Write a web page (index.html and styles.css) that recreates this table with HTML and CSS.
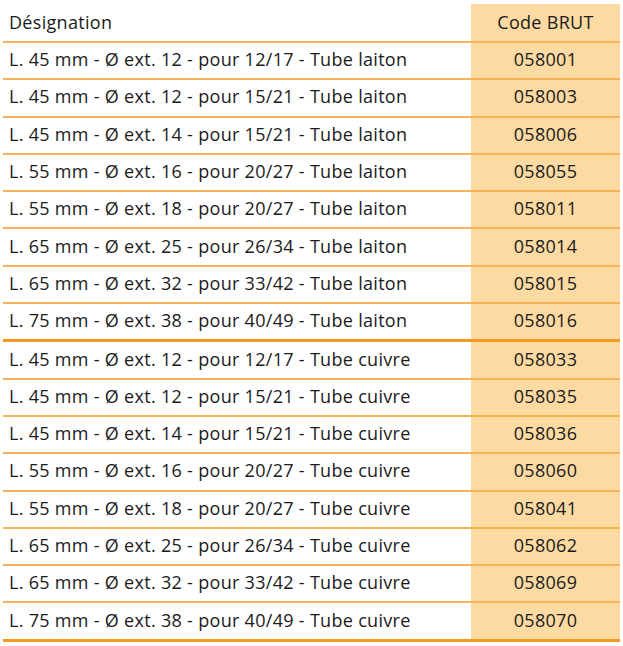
FILE: index.html
```html
<!DOCTYPE html>
<html lang="fr">
<head>
<meta charset="utf-8">
<link rel="stylesheet" href="styles.css">
<title>Tubes</title>
</head>
<body>
<table class="ref-table">
  <colgroup>
    <col class="col-designation">
    <col class="col-code">
  </colgroup>
  <thead>
    <tr><th class="designation">Désignation</th><th class="code">Code BRUT</th></tr>
  </thead>
  <tbody>
    <tr><td class="designation">L. 45 mm - Ø ext. 12 - pour 12/17 - Tube laiton</td><td class="code">058001</td></tr>
    <tr><td class="designation">L. 45 mm - Ø ext. 12 - pour 15/21 - Tube laiton</td><td class="code">058003</td></tr>
    <tr><td class="designation">L. 45 mm - Ø ext. 14 - pour 15/21 - Tube laiton</td><td class="code">058006</td></tr>
    <tr><td class="designation">L. 55 mm - Ø ext. 16 - pour 20/27 - Tube laiton</td><td class="code">058055</td></tr>
    <tr><td class="designation">L. 55 mm - Ø ext. 18 - pour 20/27 - Tube laiton</td><td class="code">058011</td></tr>
    <tr><td class="designation">L. 65 mm - Ø ext. 25 - pour 26/34 - Tube laiton</td><td class="code">058014</td></tr>
    <tr><td class="designation">L. 65 mm - Ø ext. 32 - pour 33/42 - Tube laiton</td><td class="code">058015</td></tr>
    <tr class="group-end"><td class="designation">L. 75 mm - Ø ext. 38 - pour 40/49 - Tube laiton</td><td class="code">058016</td></tr>
    <tr><td class="designation">L. 45 mm - Ø ext. 12 - pour 12/17 - Tube cuivre</td><td class="code">058033</td></tr>
    <tr><td class="designation">L. 45 mm - Ø ext. 12 - pour 15/21 - Tube cuivre</td><td class="code">058035</td></tr>
    <tr><td class="designation">L. 45 mm - Ø ext. 14 - pour 15/21 - Tube cuivre</td><td class="code">058036</td></tr>
    <tr><td class="designation">L. 55 mm - Ø ext. 16 - pour 20/27 - Tube cuivre</td><td class="code">058060</td></tr>
    <tr><td class="designation">L. 55 mm - Ø ext. 18 - pour 20/27 - Tube cuivre</td><td class="code">058041</td></tr>
    <tr><td class="designation">L. 65 mm - Ø ext. 25 - pour 26/34 - Tube cuivre</td><td class="code">058062</td></tr>
    <tr><td class="designation">L. 65 mm - Ø ext. 32 - pour 33/42 - Tube cuivre</td><td class="code">058069</td></tr>
    <tr class="group-end"><td class="designation">L. 75 mm - Ø ext. 38 - pour 40/49 - Tube cuivre</td><td class="code">058070</td></tr>
  </tbody>
</table>
</body>
</html>
```

FILE: styles.css
```css
html, body {
  margin: 0;
  padding: 0;
  background: #ffffff;
}
body {
  padding: 4px 3px 0 3px;
  font-family: "Open Sans", "Noto Sans", sans-serif;
  color: #1b1b1b;
}
.ref-table {
  border-collapse: collapse;
  width: 617px;
  table-layout: fixed;
}
.col-designation {
  width: 468px;
}
.col-code {
  width: 149px;
}
.ref-table th,
.ref-table td {
  padding: 0;
  font-weight: 400;
  font-size: 18px;
  letter-spacing: 0.3px;
  line-height: 20px;
  vertical-align: middle;
}
.ref-table th {
  height: 35px;
  padding-bottom: 2px;
  border-bottom: 2px solid #f7b25a;
}
.ref-table td {
  height: 32.3px;
  padding-bottom: 3px;
  border-bottom: 2px solid #f7b25a;
}
.ref-table tr.group-end td {
  border-bottom: 3px solid #f59a1f;
}
.ref-table .designation {
  text-align: left;
  padding-left: 6px;
}
.ref-table .code {
  text-align: center;
  background: #fedaa3;
}
```
